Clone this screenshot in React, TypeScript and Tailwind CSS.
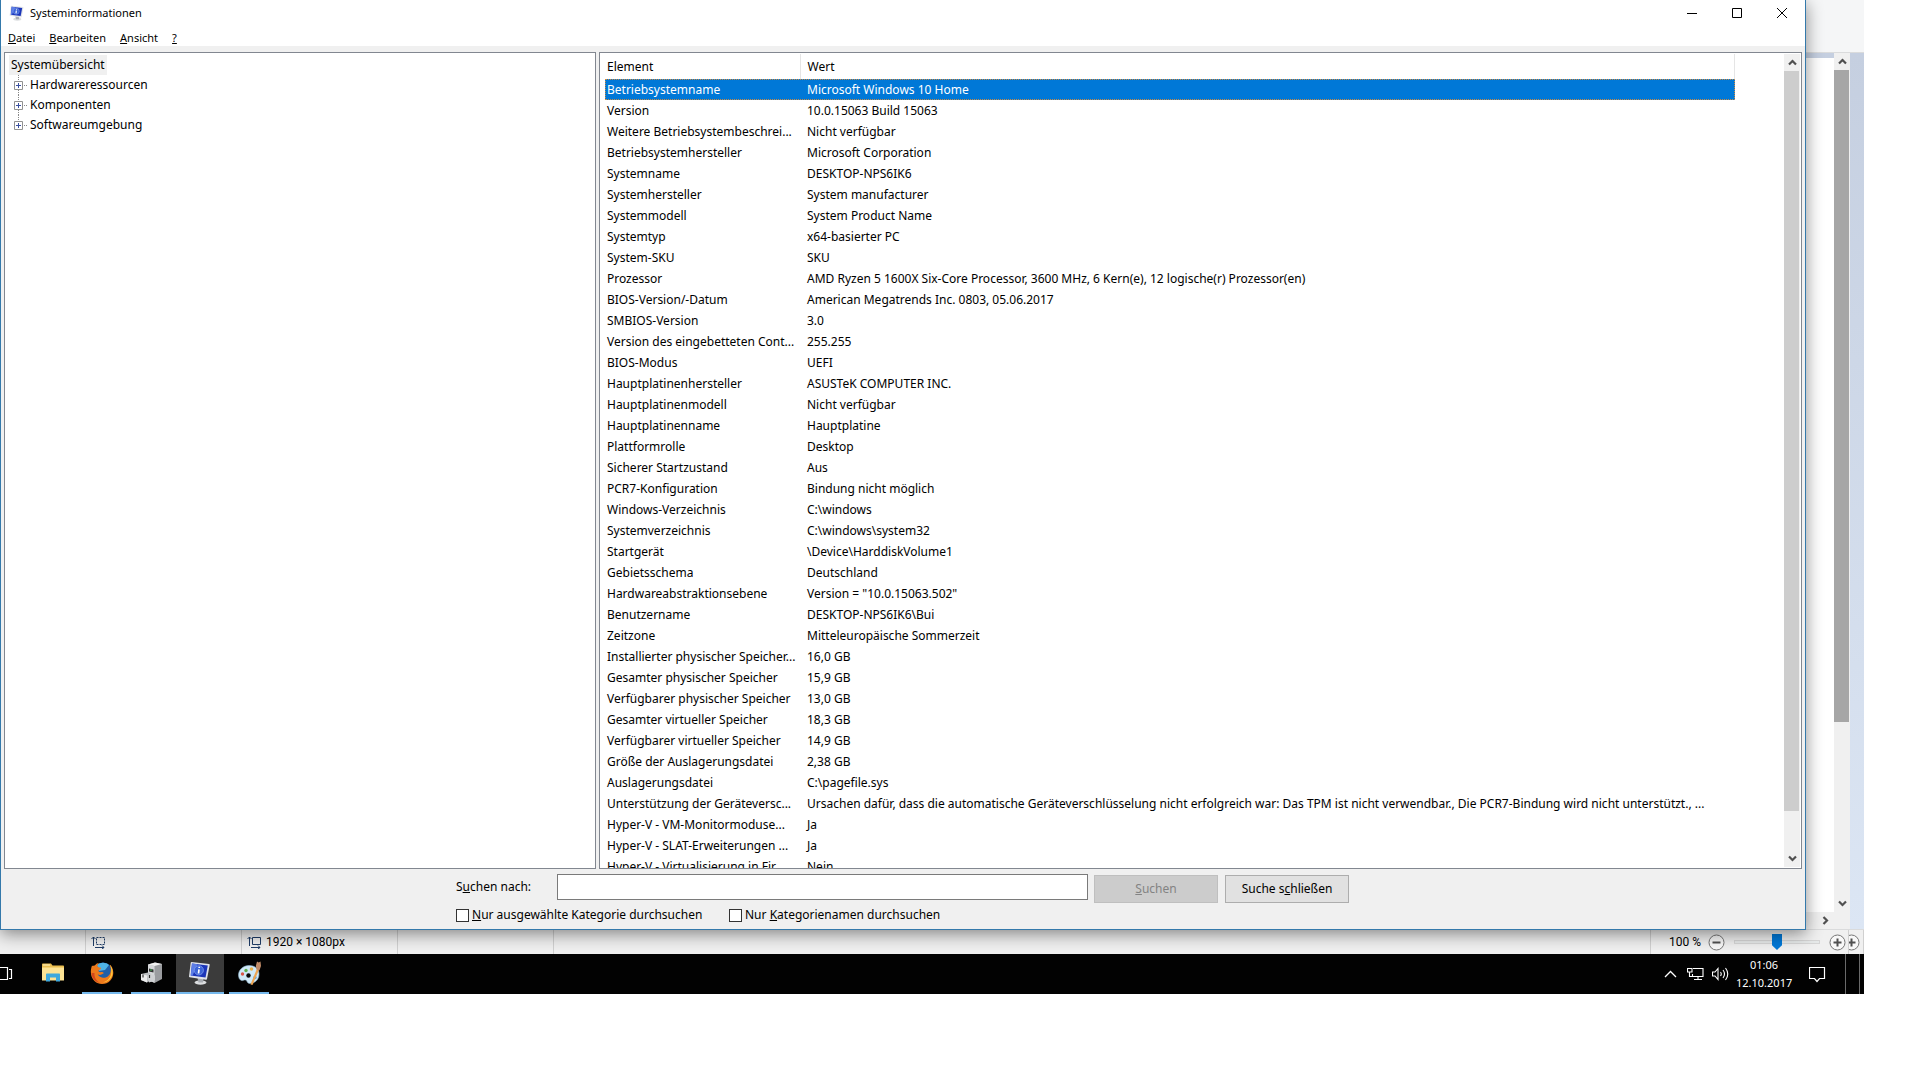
import React from 'react';

const systemRows: [string, string][] = [
  ['Betriebsystemname', 'Microsoft Windows 10 Home'],
  ['Version', '10.0.15063 Build 15063'],
  ['Weitere Betriebsystembeschrei...', 'Nicht verfügbar'],
  ['Betriebsystemhersteller', 'Microsoft Corporation'],
  ['Systemname', 'DESKTOP-NPS6IK6'],
  ['Systemhersteller', 'System manufacturer'],
  ['Systemmodell', 'System Product Name'],
  ['Systemtyp', 'x64-basierter PC'],
  ['System-SKU', 'SKU'],
  ['Prozessor', 'AMD Ryzen 5 1600X Six-Core Processor, 3600 MHz, 6 Kern(e), 12 logische(r) Prozessor(en)'],
  ['BIOS-Version/-Datum', 'American Megatrends Inc. 0803, 05.06.2017'],
  ['SMBIOS-Version', '3.0'],
  ['Version des eingebetteten Cont...', '255.255'],
  ['BIOS-Modus', 'UEFI'],
  ['Hauptplatinenhersteller', 'ASUSTeK COMPUTER INC.'],
  ['Hauptplatinenmodell', 'Nicht verfügbar'],
  ['Hauptplatinenname', 'Hauptplatine'],
  ['Plattformrolle', 'Desktop'],
  ['Sicherer Startzustand', 'Aus'],
  ['PCR7-Konfiguration', 'Bindung nicht möglich'],
  ['Windows-Verzeichnis', 'C:\\windows'],
  ['Systemverzeichnis', 'C:\\windows\\system32'],
  ['Startgerät', '\\Device\\HarddiskVolume1'],
  ['Gebietsschema', 'Deutschland'],
  ['Hardwareabstraktionsebene', 'Version = "10.0.15063.502"'],
  ['Benutzername', 'DESKTOP-NPS6IK6\\Bui'],
  ['Zeitzone', 'Mitteleuropäische Sommerzeit'],
  ['Installierter physischer Speicher...', '16,0 GB'],
  ['Gesamter physischer Speicher', '15,9 GB'],
  ['Verfügbarer physischer Speicher', '13,0 GB'],
  ['Gesamter virtueller Speicher', '18,3 GB'],
  ['Verfügbarer virtueller Speicher', '14,9 GB'],
  ['Größe der Auslagerungsdatei', '2,38 GB'],
  ['Auslagerungsdatei', 'C:\\pagefile.sys'],
  [
    'Unterstützung der Geräteversc...',
    'Ursachen dafür, dass die automatische Geräteverschlüsselung nicht erfolgreich war: Das TPM ist nicht verwendbar., Die PCR7-Bindung wird nicht unterstützt., ...',
  ],
  ['Hyper-V - VM-Monitormoduse...', 'Ja'],
  ['Hyper-V - SLAT-Erweiterungen ...', 'Ja'],
  ['Hyper-V - Virtualisierung in Fir...', 'Nein'],
];

const treeItems = ['Hardwareressourcen', 'Komponenten', 'Softwareumgebung'];

const Chevron = ({ className = '' }: { className?: string }) => (
  <svg width="9" height="9" viewBox="0 0 9 9" fill="none" stroke="#505050" strokeWidth="2.2" className={className}>
    <path d="M1 6.5 4.5 3 8 6.5" />
  </svg>
);

const MonitorIcon = ({ size }: { size: number }) => (
  <svg width={size} height={size} viewBox="0 0 24 24">
    <ellipse cx="12.5" cy="21.5" rx="6" ry="2.2" fill="#dcdee0" />
    <path d="M9.5 17h6l-.5 4.500h-4.500z" fill="#a9adb3" />
    <path d="M3.500 1 21 3c.5.1.8.4.7.9L19 18c-.1.6-.5.8-1 .7L1.700 16.300c-.5-.1-.8-.4-.7-.9L2.700 1.700c.1-.5.4-.7.8-.7z" fill="#dfe2e8" />
    <path d="M4 2.500 19.800 4.400 17.500 16.600 2.700 14.500z" fill="#1b35b8" />
    <path d="M4 2.500 9.500 3.200 4.500 14.700 2.700 14.500z" fill="#5c7de6" />
    <circle cx="10.800" cy="9.300" r="4.600" fill="#3b63d6" stroke="#7f9df0" strokeWidth=".8" />
    <path d="M11 8.300 10.500 12.500M11.300 5.800 11.200 7" stroke="#fff" strokeWidth="1.700" />
  </svg>
);

const FolderIcon = () => (
  <svg width="22" height="20" viewBox="0 0 22 20">
    <path d="M0 1.500C0 .7.500.500 1 .500h8l1.500 2H21c.6 0 1 .4 1 1V17H0z" fill="#e9bd4f" />
    <path d="M1 1.500h7v1H1z" fill="#fff3c4" />
    <path d="M0 4.500h22V17.500H0z" fill="#fde394" />
    <path d="M4 18.500v-7c0-.6.4-1 1-1h12c.6 0 1 .4 1 1v7h-4v-4H8v4z" fill="#3fa9dd" />
  </svg>
);

const FirefoxIcon = () => (
  <svg width="24" height="24" viewBox="0 0 24 24">
    <circle cx="13" cy="11" r="9.500" fill="#1f5fa8" />
    <path d="M7 4c3-3 9-3 12 0l-4 5-6 1z" fill="#4fb3e6" />
    <path d="M2 4.500C1 7 .6 9.500 1 13c.8 6 5.500 10 11 10 6.500 0 11.300-5 11.300-11.300 0-3.700-1.600-6.700-3.800-8.500 1.500 2.600 1.800 5.300.9 8.300-.9 3.400-4 5.500-7.400 5.300-2.600-.2-4.600-1.700-5.300-3.500 1.400.9 3 .7 4.200-.1.700-.5 1.200-.5 1.600-.7.300-.6-.2-1.400-1.300-1.500-1.200-.1-1.700.4-2.900 0-.6-.3-.9-.8-.8-1.500.2-.7 1.700-.9 2.300-1.500.3-.7.100-1.200-.2-1.400C8.500 6.300 7.500 6 7.300 4.700 7.500 3.500 8.500 2.500 9 2 7 2.200 5.600 3.200 4.800 4.600 3.900 4.400 3.300 4.600 2.700 5z" fill="#ee7a1c" />
    <path d="M20 4c2.200 2.500 3 5.500 2.500 9-1 5-5 8.300-9.500 8.500 4-1.500 6.500-3.500 7.700-7 1-3.500.8-7-.7-10.500z" fill="#fdc93a" />
    <path d="M1.500 12c.3 5 3.500 8.500 8 10C6 19 4 16 4.500 12z" fill="#d4461c" />
  </svg>
);

const DevicesIcon = () => (
  <svg width="23" height="22" viewBox="0 0 23 22">
    <path d="M8 2.500 15 .500l7 1.500v15l-7.500 4L8 18z" fill="#9a9c9f" />
    <path d="M8 2.500 14.500 4v16.800L8 18z" fill="#d6d8da" />
    <path d="M8 2.500 15 .500l7 1.500-7.500 2z" fill="#f1f1f1" />
    <path d="M9 6.500 13.500 7.500v3L9 9.500z" fill="#343434" />
    <path d="M10 7.500h2v1h-2z" fill="#42bb57" />
    <path d="M1 12 8 10.500l3 1.500v6L7 20.500l-6-2.500z" fill="#bbbec1" />
    <path d="M1 12 7 13.500v7L1 18z" fill="#ececec" />
    <path d="M7 13.500 11 12l4 1.500v5L9 20.500z" fill="#cfd1d3" />
    <path d="M3 12.500v3M9.500 13v3" stroke="#333" strokeWidth="1.200" />
  </svg>
);

const PaletteIcon = () => (
  <svg width="25" height="25" viewBox="0 0 25 25">
    <path d="M1.500 14C1.500 9 6 4.500 12 4.500c6 0 10 3.500 10 8.500 0 6-4.500 9.500-9.500 9.500-2.500 0-2-3-4-3.500-1.500-.4-2.500 1-4 .5C2.500 19 1.500 16.500 1.500 14z" fill="#cfe9f8" stroke="#94b9d1" strokeWidth=".6" />
    <circle cx="5.500" cy="13" r="1.700" fill="#d9584a" />
    <circle cx="9" cy="9.500" r="1.700" fill="#5fb04f" />
    <circle cx="14.500" cy="8" r="1.800" fill="#e9b04a" />
    <circle cx="11.500" cy="14.500" r="2.200" fill="#0a0a0a" />
    <circle cx="18" cy="16.500" r="1.700" fill="#5f9fd8" />
    <path d="M19.800 8 22 8.800 15.500 24 13.500 23.500z" fill="#eda552" />
    <path d="M19.500 8.500 18.800 5l1.200-4.500 1.700 1L23.500.500 24 5 22.500 9.300z" fill="#c08a66" />
  </svg>
);

const SizeIcon = ({ dashed = false }: { dashed?: boolean }) => (
  <svg width="14" height="13" viewBox="0 0 14 13" fill="none" stroke="#1f3c66">
    <path d="M2.500 10V1M.5 3l2-2 2 2" />
    <path d="M5.500 1.500h8v7h-8z" strokeDasharray={dashed ? '2 1' : undefined} />
    <path d="M4 11.500h9M11 9.500l2 2-2 1.500" />
  </svg>
);

const ZoomIcon = ({ plus = false }: { plus?: boolean }) => (
  <svg width="17" height="17" viewBox="0 0 17 17" fill="none" className="shrink-0">
    <circle cx="8.500" cy="8.500" r="7.500" fill="#f8f8f8" stroke="#777" />
    <path d={plus ? 'M4.500 8.500h8M8.500 4.500v8' : 'M4.500 8.500h8'} stroke="#505050" strokeWidth="2" />
  </svg>
);

const TitleBar = () => (
  <div className="flex h-[25px] shrink-0 bg-white pr-px text-[11px]">
    <div className="flex flex-1 items-center gap-[5px] pl-2">
      <MonitorIcon size={16} />
      <span>Systeminformationen</span>
    </div>
    <button aria-label="Minimieren" className="flex w-[45px] items-center justify-center">
      <svg width="10" height="10" stroke="#000"><path d="M0 5.500h10" /></svg>
    </button>
    <button aria-label="Maximieren" className="flex w-[45px] items-center justify-center">
      <svg width="10" height="10" fill="none" stroke="#000"><path d="M.5.500h9v9h-9z" /></svg>
    </button>
    <button aria-label="Schließen" className="flex w-[45px] items-center justify-center">
      <svg width="10" height="10" stroke="#000"><path d="M0 0 10 10M10 0 0 10" /></svg>
    </button>
  </div>
);

const MenuBar = () => (
  <nav className="flex h-[21px] shrink-0 items-center gap-3.5 bg-white pt-1 pl-[7px] text-[11px]">
    <button><u>D</u>atei</button>
    <button><u>B</u>earbeiten</button>
    <button><u>A</u>nsicht</button>
    <button><u>?</u></button>
  </nav>
);

const CategoryTree = () => (
  <div className="w-[592px] shrink-0 border border-[#828790] bg-white pt-0.5 pl-1">
    <div className="flex h-5">
      <span className="flex items-center bg-[#f0f0f0] px-0.5">Systemübersicht</span>
    </div>
    <ul>
      {treeItems.map((item, idx) => (
        <li key={item} className="flex h-5 items-center">
          <svg width="18" height="20" fill="none" className="ml-[3px]">
            {idx < treeItems.length - 1 && <path d="M6.500 15v5" stroke="#888" strokeDasharray="1 1" />}
            <path d="M6.500 0v6" stroke="#888" strokeDasharray="1 1" />
            <path d="M12 10.500h4" stroke="#888" strokeDasharray="1 1" />
            <path d="M2.500 6.500h8v8h-8z" fill="#fff" stroke="#919191" />
            <path d="M4 10.500h5M6.500 8v5" stroke="#3a4fa0" />
          </svg>
          <span>{item}</span>
        </li>
      ))}
    </ul>
  </div>
);

const DetailsPanel = () => (
  <div className="flex min-w-0 flex-1 border border-[#828790] bg-white">
    <div className="min-w-0 flex-1 overflow-hidden pt-px pl-[5px]">
      <table className="w-[1130px] table-fixed border-collapse text-left">
        <thead>
          <tr className="h-[25px]">
            <th className="w-[195px] border-r border-[#e5e5e5] p-0 pl-0.5 font-normal">Element</th>
            <th className="border-r border-[#e5e5e5] p-0 pl-[7px] font-normal">Wert</th>
          </tr>
        </thead>
        <tbody>
          {systemRows.map(([name, value], idx) => (
            <tr
              key={name}
              className={idx === 0 ? 'h-[21px] bg-[#0078d7] text-white outline-1 -outline-offset-1 outline-dotted outline-[#c98a45]' : 'h-[21px]'}
            >
              <td className="overflow-hidden p-0 pl-0.5 whitespace-nowrap">{name}</td>
              <td className="overflow-hidden p-0 pl-[7px] whitespace-nowrap">{value}</td>
            </tr>
          ))}
        </tbody>
      </table>
    </div>
    <div className="my-px mr-px flex w-4 flex-col bg-[#f0f0f0]">
      <button aria-label="Nach oben" className="flex h-[17px] items-center justify-center"><Chevron /></button>
      <div className="flex-1">
        <div className="mr-px h-[95%] bg-[#cdcdcd]" />
      </div>
      <button aria-label="Nach unten" className="flex h-[17px] items-center justify-center"><Chevron className="rotate-180" /></button>
    </div>
  </div>
);

const SearchBar = () => (
  <form className="mx-auto w-[894px] shrink-0 pt-[5px] pb-[5px]">
    <div className="flex items-start">
      <label htmlFor="search" className="w-[101px] leading-[26px]">S<u>u</u>chen nach:</label>
      <input id="search" type="text" className="h-[26px] w-[531px] border border-[#7a7a7a] bg-white px-1 outline-none" />
      <button type="button" disabled className="mt-px ml-1.5 h-7 w-[124px] border border-[#bfbfbf] bg-[#cccccc] text-[#838383]">
        <u>S</u>uchen
      </button>
      <button type="button" className="mt-px ml-[7px] h-7 w-[124px] border border-[#adadad] bg-[#e1e1e1]">
        Suche s<u>c</u>hließen
      </button>
    </div>
    <div className="mt-[3px] flex h-[18px] items-center">
      <label className="flex w-[273px] items-center gap-[3px] whitespace-nowrap">
        <input type="checkbox" className="size-[13px] shrink-0 appearance-none border border-[#333] bg-white" />
        <span><u>N</u>ur ausgewählte Kategorie durchsuchen</span>
      </label>
      <label className="flex items-center gap-[3px] whitespace-nowrap">
        <input type="checkbox" className="size-[13px] shrink-0 appearance-none border border-[#333] bg-white" />
        <span>Nur <u>K</u>ategorienamen durchsuchen</span>
      </label>
    </div>
  </form>
);

// Sliver of the Paint window that shows to the right of the dialog
const PaintEdge = () => (
  <div className="flex w-[58px] shrink-0 flex-col border-b border-[#dadbdc] bg-[#f0f0f0]">
    <div className="h-[52px] shrink-0 bg-[#f5f6f7]" />
    <div className="flex min-h-0 flex-1 border-t border-[#dadbdc]">
      <div className="flex w-7 flex-col">
        <div className="h-[5px] bg-[#c5cfe0]" />
        <div className="flex-1 bg-white" />
        <button aria-label="Nach rechts" className="flex h-[17px] items-center justify-end pr-1"><Chevron className="rotate-90" /></button>
      </div>
      <div className="mb-[17px] flex w-4 flex-col">
        <button aria-label="Nach oben" className="flex h-[17px] items-center justify-center"><Chevron /></button>
        <div className="flex-1">
          <div className="mr-px h-[79%] bg-[#a6a6a6]" />
        </div>
        <button aria-label="Nach unten" className="flex h-[17px] items-center justify-center"><Chevron className="rotate-180" /></button>
      </div>
      <div className="flex-1 bg-gradient-to-b from-[#c5cfe0] to-[#dce6f4]" />
    </div>
  </div>
);

const StatusBar = () => (
  <footer className="flex h-6 shrink-0 bg-[#f0f0f0] font-['Roboto',sans-serif]">
    <div className="w-[86px] border-r border-[#d0d0d0]" />
    <div className="flex w-[156px] items-center border-r border-[#d0d0d0] pl-[5px]"><SizeIcon dashed /></div>
    <div className="flex w-[156px] items-center gap-[5px] border-r border-[#d0d0d0] pl-[5px]">
      <SizeIcon />
      <span>1920 × 1080px</span>
    </div>
    <div className="w-[156px] border-r border-[#d0d0d0]" />
    <div className="flex-1 border-r border-[#d0d0d0]" />
    <div className="flex w-[197px] items-center justify-end pr-0.5">
      <label htmlFor="zoom" className="mr-[7px]">100 %</label>
      <button aria-label="Verkleinern"><ZoomIcon /></button>
      <input
        id="zoom"
        type="range"
        defaultValue={50}
        className="mx-[9px] h-4 w-[86px] appearance-none bg-transparent [&::-webkit-slider-runnable-track]:h-1 [&::-webkit-slider-runnable-track]:border [&::-webkit-slider-runnable-track]:border-[#d6d6d6] [&::-webkit-slider-runnable-track]:bg-[#e7eaea] [&::-webkit-slider-thumb]:-mt-[7px] [&::-webkit-slider-thumb]:h-4 [&::-webkit-slider-thumb]:w-2.5 [&::-webkit-slider-thumb]:appearance-none [&::-webkit-slider-thumb]:bg-[#0078d7] [&::-webkit-slider-thumb]:[clip-path:polygon(0_0,100%_0,100%_70%,50%_100%,0_70%)]"
      />
      <button aria-label="Vergrößern"><ZoomIcon plus /></button>
    </div>
    <div className="flex w-4 items-center justify-end overflow-hidden border-x border-[#d0d0d0] pr-[3px]"><ZoomIcon plus /></div>
  </footer>
);

const taskButtons = [
  { label: 'Explorer', icon: <FolderIcon />, open: false, active: false },
  { label: 'Firefox', icon: <FirefoxIcon />, open: true, active: false },
  { label: 'Geräte', icon: <DevicesIcon />, open: true, active: false },
  { label: 'Systeminformationen', icon: <MonitorIcon size={24} />, open: true, active: true },
  { label: 'Paint', icon: <PaletteIcon />, open: true, active: false },
];

const Taskbar = () => (
  <div className="flex h-10 shrink-0 items-stretch bg-[#020202] text-white">
    <button aria-label="Taskansicht" className="flex w-[29px] items-center">
      <svg width="13" height="14" fill="none" stroke="#fff">
        <path d="M0 .5h7.500v12H0M9 2.500h2.500v9H9" strokeWidth="1.200" />
      </svg>
    </button>
    <div className="flex gap-px">
      {taskButtons.map((task) => (
        <button
          key={task.label}
          aria-label={task.label}
          className={task.active ? 'flex w-12 flex-col items-center bg-[#3b3b3b]' : 'flex w-12 flex-col items-center'}
        >
          <span className="flex flex-1 items-center">{task.icon}</span>
          <span className={task.active ? 'h-0.5 w-12 bg-[#76b9ed]' : task.open ? 'h-0.5 w-10 bg-[#76b9ed]' : 'h-0.5 w-10'} />
        </button>
      ))}
    </div>
    <div className="flex flex-1 items-center justify-end pr-[19px]">
      <button aria-label="Ausgeblendete Symbole" className="mr-2.5">
        <svg width="13" height="8" fill="none" stroke="#fff" strokeWidth="1.300"><path d="m1 7 5.500-5.500L12 7" /></svg>
      </button>
      <button aria-label="Netzwerk" className="mr-2">
        <svg width="17" height="14" fill="none" stroke="#fff" strokeWidth="1.100">
          <path d="M6 1.500h10v8H5.500V7M11 9.500v3M7 12.500h8M.5 1.500H5V5H.5zM2.500 5v4.500h3" />
        </svg>
      </button>
      <button aria-label="Lautstärke" className="mr-[7px]">
        <svg width="17" height="14" fill="none" stroke="#fff" strokeWidth="1.100">
          <path d="M.5 5h2.500l3-3.500v11L3 9H.5zM8.500 5q1.500 2 0 4M11 3q3 4 0 8M13.500 1q4.500 6 0 12" />
        </svg>
      </button>
      <div className="w-[56px] text-center text-[11px] leading-[18px]">
        <div>01:06</div>
        <div>12.10.2017</div>
      </div>
      <button aria-label="Info-Center" className="ml-[17px]">
        <svg width="17" height="17" fill="none" stroke="#fff" strokeWidth="1.200"><path d="M.5 1.500h15v11h-5L8 15.500l-2.500-3h-5z" /></svg>
      </button>
    </div>
    <div className="w-[15px] border-x border-[#6a6a6a]" />
    <div className="w-1" />
  </div>
);

export default function App() {
  return (
    <div className="flex h-screen flex-col overflow-hidden bg-white pr-14 pb-[86px] font-['Noto_Sans','Open_Sans',sans-serif] text-[12px] leading-4 text-black">
      <div className="flex min-h-0 flex-1">
        <main className="z-10 flex min-w-0 flex-1 flex-col border border-t-0 border-[#3479ab] bg-[#f0f0f0] shadow-[0_4px_16px_rgba(0,0,0,0.45)]">
          <TitleBar />
          <MenuBar />
          <div className="flex min-h-0 flex-1 gap-[3px] px-[3px] pt-1.5">
            <CategoryTree />
            <DetailsPanel />
          </div>
          <SearchBar />
        </main>
        <PaintEdge />
      </div>
      <StatusBar />
      <Taskbar />
    </div>
  );
}
